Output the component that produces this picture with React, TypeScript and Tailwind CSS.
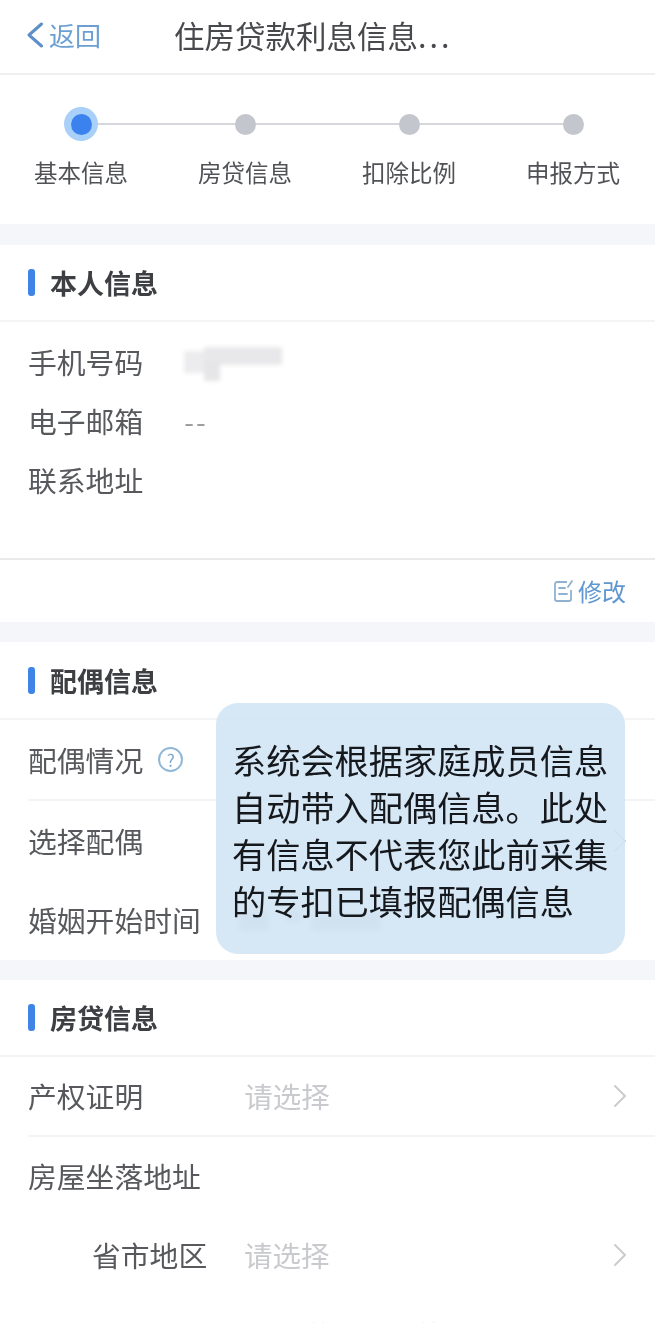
const font = { fontFamily: '"Noto Sans CJK SC", "Noto Sans", sans-serif' };

function Chevron({ className }: { className?: string }) {
  return (
    <svg width="14" height="24" viewBox="0 0 14 24" fill="none" className={className}>
      <path d="M2 2l10 10L2 22" stroke="currentColor" strokeWidth="2" strokeLinecap="round" strokeLinejoin="round" />
    </svg>
  );
}

function Step({ label, active }: { label: string; active?: boolean }) {
  return (
    <div className="flex flex-col items-center w-[164px]">
      <div className="h-[100px] flex flex-col items-center">
        <div className="h-[36px] w-[36px] flex items-center justify-center">
          {active ? (
            <div className="w-[34px] h-[34px] rounded-full bg-[#a9d0f8] flex items-center justify-center">
              <div className="w-[21px] h-[21px] rounded-full bg-[#3b82ee]" />
            </div>
          ) : (
            <div className="w-[21px] h-[21px] rounded-full bg-[#c3c6cc]" />
          )}
        </div>
        <div className="mt-[13px] h-[34px] leading-[34px] text-[23.5px] text-[#505256] whitespace-nowrap">{label}</div>
      </div>
    </div>
  );
}

function SectionTitle({ title, h = 77 }: { title: string; h?: number }) {
  return (
    <div className="flex items-center pl-[28px] border-b-2 border-[#f3f4f6]" style={{ height: h }}>
      <div className="w-[7px] h-[27px] rounded-[3px] bg-[#3f84e6]" />
      <div className="ml-[15px] mt-[2px] text-[27px] font-bold text-[#3d3f43]">{title}</div>
    </div>
  );
}

function Row({
  label,
  value,
  chevron,
  divider,
  indent,
  h = 59,
}: {
  label: string;
  value?: React.ReactNode;
  chevron?: boolean;
  divider?: boolean;
  indent?: boolean;
  h?: number;
}) {
  return (
    <div className="pl-[28px]">
      <div
        className={
          divider
            ? "flex items-center border-b-2 border-[#f3f4f6] pr-[28px]"
            : "flex items-center pr-[28px]"
        }
        style={{ height: h }}
      >
        <div className={indent ? "pl-[64px] w-[216px] shrink-0 whitespace-nowrap text-[28.8px] text-[#57595d]" : "whitespace-nowrap text-[28.8px] text-[#57595d]"}>
          {label}
        </div>
        {value}
        {chevron && <Chevron className="ml-auto text-[#c9cbcf] shrink-0" />}
      </div>
    </div>
  );
}

function Placeholder() {
  return <span className="text-[28.5px] text-[#c8cacd] whitespace-nowrap">请选择</span>;
}

export default function App() {
  return (
    <div className="relative w-[655px] h-[1323px] overflow-hidden bg-white blur-[0.7px]" style={font}>
      {/* Header */}
      <div className="h-[75px] flex items-center border-b-2 border-[#eeeff1]">
        <svg width="18" height="26" viewBox="0 0 18 26" fill="none" className="ml-[26px] mb-[4px]">
          <path d="M15.5 2L3 13l12.5 11" stroke="#5d90c8" strokeWidth="3" strokeLinecap="round" strokeLinejoin="round" />
        </svg>
        <span className="ml-[5px] mb-[4px] text-[26px] text-[#6b9fd2]">返回</span>
        <span className="ml-[73px] mb-[2px] text-[30.5px] text-[#48494c] whitespace-nowrap">
          住房贷款利息信息<span className="tracking-[3px]">...</span>
        </span>
      </div>

      {/* Stepper */}
      <div className="relative h-[149px] pt-[31px] flex justify-center">
        <div className="absolute left-[82px] top-[48px] w-[491px] h-[2px] bg-[#d6d7da]" />
        <div className="relative flex -ml-[1px]">
          <Step label="基本信息" active />
          <Step label="房贷信息" />
          <Step label="扣除比例" />
          <Step label="申报方式" />
        </div>
      </div>
      <div className="h-[21px] bg-[#f4f6fa]" />

      {/* 本人信息 */}
      <SectionTitle title="本人信息" />
      <div className="pt-[10px] h-[238px] border-b-2 border-[#e9eaec]">
        <Row
          label="手机号码"
          value={
            <div className="ml-[41px] relative w-[98px] h-[34px] mt-[4px] blur-[2px]">
              <div className="absolute left-[0px] top-[4px] w-[22px] h-[22px] bg-[#ececee]" />
              <div className="absolute left-[20px] top-[0px] w-[78px] h-[18px] bg-[#e8e8ea]" />
              <div className="absolute left-[20px] top-[14px] w-[16px] h-[20px] bg-[#e6e6e8]" />
            </div>
          }
        />
        <Row label="电子邮箱" value={<span className="ml-[41px] text-[28px] text-[#9a9c9f] tracking-[2px]">--</span>} />
        <Row label="联系地址" />
      </div>
      <div className="h-[62px] flex items-center justify-end pr-[29px]">
        <svg width="22" height="24" viewBox="0 0 22 24" fill="none" className="mr-[3px]">
          <path d="M14 3H4a2 2 0 0 0-2 2v15a2 2 0 0 0 2 2h12a2 2 0 0 0 2-2V11" stroke="#8fb2d3" strokeWidth="1.8" />
          <path d="M6 9h6M6 15h8M15 8l4-6" stroke="#8fb2d3" strokeWidth="1.8" strokeLinecap="round" />
        </svg>
        <span className="text-[24px] text-[#5f97d0]">修改</span>
      </div>
      <div className="h-[20px] bg-[#f4f6fa]" />

      {/* 配偶信息 */}
      <SectionTitle title="配偶信息" h={78} />
      <Row
        label="配偶情况"
        h={81}
        divider
        value={
          <span className="ml-[15px] w-[25px] h-[25px] rounded-full border-2 border-[#8fb8d8] flex items-center justify-center text-[17px] leading-none text-[#7fa9cc]">
            ?
          </span>
        }
      />
      <Row label="选择配偶" h={80} chevron />
      <Row
        label="婚姻开始时间"
        h={77}
        value={
          <div className="relative ml-[38px] w-[160px] h-[22px] blur-[3px]">
            <div className="absolute left-[0px] top-[2px] w-[30px] h-[20px] bg-[#c4c7cb]" />
            <div className="absolute left-[48px] top-[0px] w-[14px] h-[14px] bg-[#c4c7cb]" />
            <div className="absolute left-[72px] top-[4px] w-[70px] h-[18px] bg-[#c4c7cb]" />
          </div>
        }
      />
      <div className="h-[2px]" />
      <div className="h-[20px] bg-[#f4f6fa]" />

      {/* 房贷信息 */}
      <SectionTitle title="房贷信息" />
      <Row label="产权证明" h={80} divider chevron value={<span className="ml-[101px]"><Placeholder /></span>} />
      <Row label="房屋坐落地址" h={78} />
      <Row label="省市地区" h={80} indent chevron value={<Placeholder />} />
      <Row label="详细地址" h={81} indent value={<span className="text-[28.5px] text-[#d0d2d5] whitespace-nowrap">如：道路、门牌号、小区</span>} />

      {/* Tip overlay */}
      <div className="absolute left-[216px] top-[703px] w-[409px] h-[251px] rounded-[22px] bg-[#d2e4f4]/90 pl-[16px] pt-[33px]">
        <div className="text-[34.2px] leading-[47px] text-[#15181c] w-[380px]">
          系统会根据家庭成员信息
          <br />
          自动带入配偶信息。此处
          <br />
          有信息不代表您此前采集
          <br />
          的专扣已填报配偶信息
        </div>
      </div>
    </div>
  );
}
